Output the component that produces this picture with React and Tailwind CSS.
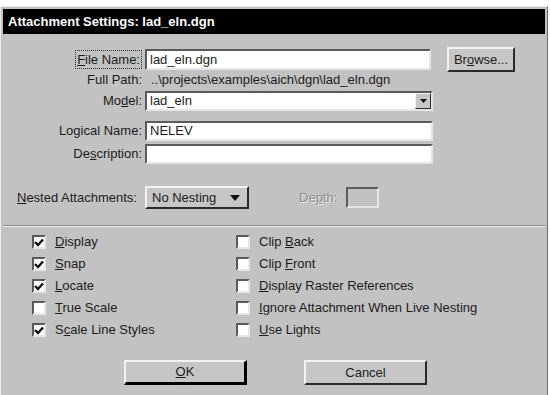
import React from 'react';

const sunken = 'border-2 border-t-[#5a5a5a] border-l-[#5a5a5a] border-b-[#e6e6e6] border-r-[#e6e6e6]';
const raised = 'border-2 border-t-[#f2f2f2] border-l-[#f2f2f2] border-b-[#2a2a2a] border-r-[#2a2a2a]';

function Check({ checked, children }) {
    return (
        <div className="flex h-[22px] items-center">
            <div className={`flex h-[14px] w-[14px] items-center justify-center bg-white ${sunken}`}>
                {checked && (
                    <svg width="10" height="9" viewBox="0 0 10 9">
                        <path d="M1 4 L4 7 L9 1.5" stroke="#111" strokeWidth="2.4" fill="none" />
                    </svg>
                )}
            </div>
            <span className="ml-[9px] whitespace-nowrap">{children}</span>
        </div>
    );
}

export default function App() {
    return (
        <div className="h-[395px] w-[550px] overflow-hidden bg-white pt-[6px] text-[13px] text-[#1c1c1c]" style={{ fontFamily: '"Liberation Sans", Arial, sans-serif' }}>
            <div className="h-[395px] w-[548px] border border-l-[#ececec] border-t-[#ececec] border-r-[#6a6a6a] border-b-[#6a6a6a] bg-[#c2c2c2] p-[2px]">
                <div className="flex h-[25px] items-center bg-black pl-[5px] text-[13px] font-bold text-white">
                    Attachment Settings: lad_eln.dgn
                </div>

                <div className="mt-[13px] flex h-[25px] items-center">
                    <div className="w-[139px] text-right">
                        <span className="border border-dotted border-[#333] px-[1px] py-[1px]"><u>F</u>ile Name:</span>
                    </div>
                    <div className={`ml-[3px] flex h-[21px] w-[286px] items-center bg-white pl-[3px] ${sunken}`}>lad_eln.dgn</div>
                    <button className={`ml-[16px] h-[25px] w-[68px] bg-[#c6c6c6] ${raised}`}>Br<u>o</u>wse...</button>
                </div>

                <div className="flex h-[16px] items-center">
                    <div className="w-[139px] text-right">Full Path:</div>
                    <div className="ml-[9px] whitespace-nowrap">..\projects\examples\aich\dgn\lad_eln.dgn</div>
                </div>

                <div className="mt-[3px] flex h-[20px] items-center">
                    <div className="w-[139px] text-right">Mo<u>d</u>el:</div>
                    <div className={`ml-[3px] flex h-[20px] w-[288px] items-center justify-between bg-white pl-[3px] ${sunken}`}>
                        <span>lad_eln</span>
                        <div className={`flex h-[16px] w-[16px] items-center justify-center bg-[#c6c6c6] ${raised} border-[1px]`}>
                            <svg width="7" height="4" viewBox="0 0 7 4"><path d="M0 0 H7 L3.5 4 Z" fill="#111" /></svg>
                        </div>
                    </div>
                </div>

                <div className="mt-[10px] flex h-[20px] items-center">
                    <div className="w-[139px] text-right">Logical Name:</div>
                    <div className={`ml-[3px] flex h-[20px] w-[288px] items-center bg-white pl-[3px] ${sunken}`}>NELEV</div>
                </div>

                <div className="mt-[3px] flex h-[20px] items-center">
                    <div className="w-[139px] text-right">De<u>s</u>cription:</div>
                    <div className={`ml-[3px] h-[20px] w-[288px] bg-white ${sunken}`} />
                </div>

                <div className="mt-[22px] flex h-[23px] items-center">
                    <div className="ml-[14px] w-[125px] whitespace-nowrap"><u>N</u>ested Attachments:</div>
                    <button className={`ml-[3px] flex h-[23px] w-[104px] items-center justify-between bg-[#c6c6c6] pl-[5px] pr-[7px] ${raised}`}>
                        <span>No Nesting</span>
                        <svg width="10" height="6" viewBox="0 0 10 6"><path d="M0 0 H10 L5 6 Z" fill="#111" /></svg>
                    </button>
                    <div className="ml-[50px] text-[#8c8c8c]" style={{ textShadow: '1px 1px 0 #ececec' }}>De<u>p</u>th:</div>
                    <div className={`ml-[9px] h-[21px] w-[33px] bg-[#c2c2c2] ${sunken}`} />
                </div>

                <div className="mt-[16px] h-[2px] border-t border-b border-t-[#8a8a8a] border-b-[#ececec]" />

                <div className="mt-[4px] flex">
                    <div className="ml-[29px] w-[204px]">
                        <Check checked><u>D</u>isplay</Check>
                        <Check checked><u>S</u>nap</Check>
                        <Check checked><u>L</u>ocate</Check>
                        <Check><u>T</u>rue Scale</Check>
                        <Check checked>S<u>c</u>ale Line Styles</Check>
                    </div>
                    <div>
                        <Check>Clip <u>B</u>ack</Check>
                        <Check>Clip <u>F</u>ront</Check>
                        <Check><u>D</u>isplay Raster References</Check>
                        <Check><u>I</u>gnore Attachment When Live Nesting</Check>
                        <Check><u>U</u>se Lights</Check>
                    </div>
                </div>

                <div className="mt-[19px] flex">
                    <button className={`ml-[121px] h-[25px] w-[123px] bg-[#c6c6c6] ${raised} border-b-[3px] border-r-[3px] border-b-black border-r-black`}><u>O</u>K</button>
                    <button className={`ml-[57px] h-[25px] w-[123px] bg-[#c6c6c6] ${raised}`}>Cancel</button>
                </div>
            </div>
        </div>
    );
}
